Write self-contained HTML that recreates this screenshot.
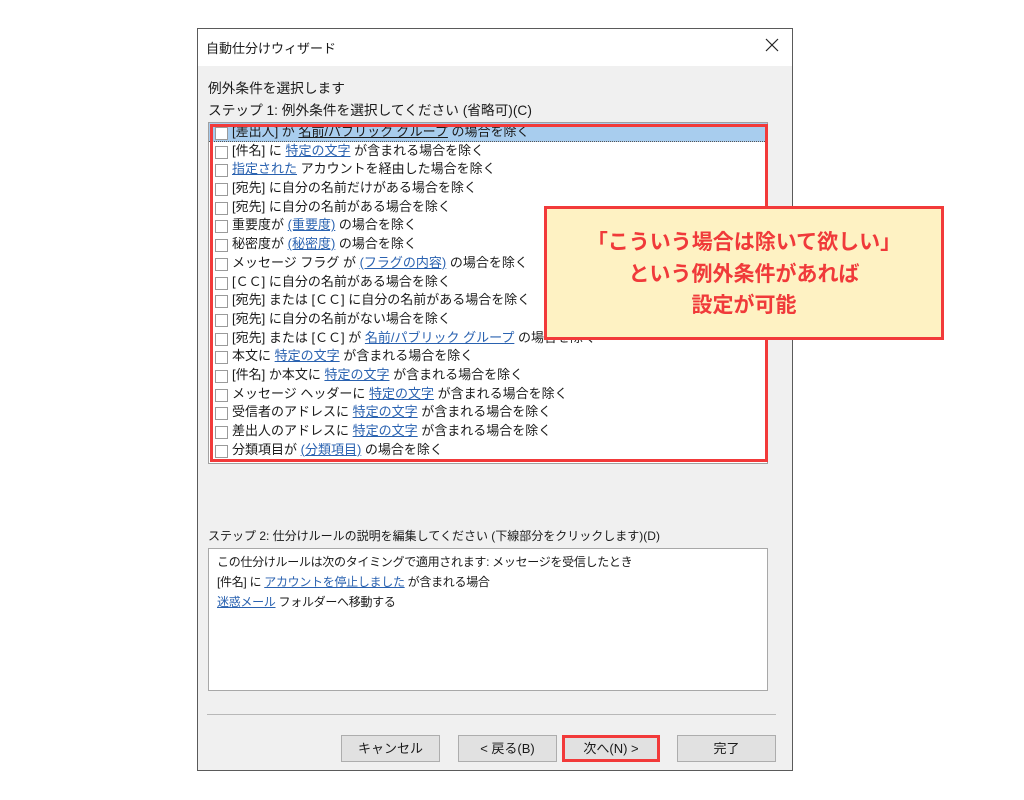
<!DOCTYPE html>
<html><head><meta charset="utf-8"><style>
*{margin:0;padding:0;box-sizing:border-box}
body{width:1024px;height:800px;background:#fff;position:relative;overflow:hidden;font-family:"Liberation Sans","Noto Sans CJK JP",sans-serif;font-size:13px;color:#1a1a1a}
.dlg{position:absolute;left:197px;top:28px;width:596px;height:743px;border:1px solid #5a5a5a;background:#f0f0f0}
.title{position:absolute;left:0;top:0;width:100%;height:37px;background:#fff}
.title span{position:absolute;left:8px;top:9px;font-size:13px}
.x{position:absolute;right:12px;top:8px;width:16px;height:16px}
.abs{position:absolute;white-space:nowrap}
.list{position:absolute;left:208px;top:122px;width:560px;height:342px;background:#fff;border:1px solid #a0a0a0;overflow:hidden}
.row{height:18.7px;line-height:18.7px;padding-left:23px;position:relative;white-space:nowrap}
.row:before{content:"";position:absolute;left:6px;top:4px;width:11px;height:11px;border:1px solid #9a9a9a;background:#fff}
.row.sel{background:#a8cdee;border-bottom:1px dotted #555}
a{color:#2a62b0;text-decoration:underline}
.sel a{color:#1a1a1a}
.redbox{position:absolute;border:3px solid #f23a3a}
.desc{position:absolute;left:208px;top:548px;width:560px;height:143px;background:#fff;border:1px solid #a8a8a8;padding:3px 8px;line-height:20px;font-size:12px;letter-spacing:-0.3px}
.sep{position:absolute;left:207px;top:714px;width:569px;height:1px;background:#b8b8b8}
.btn{position:absolute;top:735px;width:99px;height:27px;background:#e1e1e1;border:1px solid #adadad;text-align:center;line-height:25px}
.call{position:absolute;left:544px;top:206px;width:400px;height:134px;background:#fef2c3;border:3px solid #f23a3a;color:#f03a3a;font-weight:bold;font-size:21px;text-align:center;line-height:31.5px;padding-top:18px}
</style></head><body>
<div class="dlg">
<div class="title"><span>自動仕分けウィザード</span>
<svg class="x" viewBox="0 0 16 16"><path d="M2 2L14 14M14 2L2 14" stroke="#222" stroke-width="1.2"/></svg></div>
</div>
<div class="abs" style="left:208px;top:77px;font-size:13.7px">例外条件を選択します</div>
<div class="abs" style="left:208px;top:99px;font-size:13.7px">ステップ 1: 例外条件を選択してください (省略可)(C)</div>
<div class="list">
<div class="row sel">[差出人] が <a>名前/パブリック グループ</a> の場合を除く</div>
<div class="row">[件名] に <a>特定の文字</a> が含まれる場合を除く</div>
<div class="row"><a>指定された</a> アカウントを経由した場合を除く</div>
<div class="row">[宛先] に自分の名前だけがある場合を除く</div>
<div class="row">[宛先] に自分の名前がある場合を除く</div>
<div class="row">重要度が <a>(重要度)</a> の場合を除く</div>
<div class="row">秘密度が <a>(秘密度)</a> の場合を除く</div>
<div class="row">メッセージ フラグ が <a>(フラグの内容)</a> の場合を除く</div>
<div class="row">[ＣＣ] に自分の名前がある場合を除く</div>
<div class="row">[宛先] または [ＣＣ] に自分の名前がある場合を除く</div>
<div class="row">[宛先] に自分の名前がない場合を除く</div>
<div class="row">[宛先] または [ＣＣ] が <a>名前/パブリック グループ</a> の場合を除く</div>
<div class="row">本文に <a>特定の文字</a> が含まれる場合を除く</div>
<div class="row">[件名] か本文に <a>特定の文字</a> が含まれる場合を除く</div>
<div class="row">メッセージ ヘッダーに <a>特定の文字</a> が含まれる場合を除く</div>
<div class="row">受信者のアドレスに <a>特定の文字</a> が含まれる場合を除く</div>
<div class="row">差出人のアドレスに <a>特定の文字</a> が含まれる場合を除く</div>
<div class="row">分類項目が <a>(分類項目)</a> の場合を除く</div>
</div>
<div class="redbox" style="left:210px;top:124px;width:558px;height:338px"></div>
<div class="call">「こういう場合は除いて欲しい」<br>という例外条件があれば<br>設定が可能</div>
<div class="abs" style="left:208px;top:527px;font-size:12px">ステップ 2: 仕分けルールの説明を編集してください (下線部分をクリックします)(D)</div>
<div class="desc">この仕分けルールは次のタイミングで適用されます: メッセージを受信したとき<br>[件名] に <a>アカウントを停止しました</a> が含まれる場合<br><a>迷惑メール</a> フォルダーへ移動する</div>
<div class="sep"></div>
<div class="btn" style="left:341px">キャンセル</div>
<div class="btn" style="left:458px">&lt; 戻る(B)</div>
<div class="btn" style="left:562px;width:98px;border:3px solid #f23a3a;line-height:21px">次へ(N) &gt;</div>
<div class="btn" style="left:677px">完了</div>
</body></html>
